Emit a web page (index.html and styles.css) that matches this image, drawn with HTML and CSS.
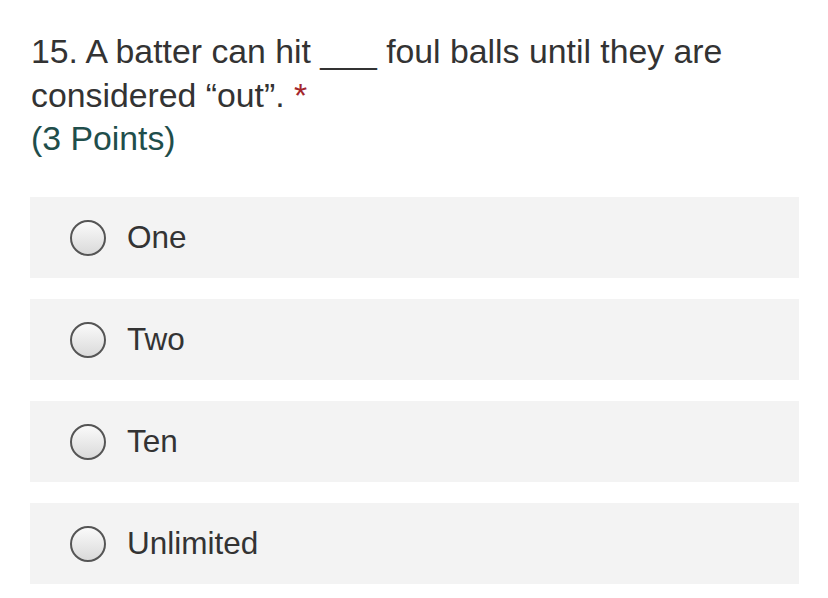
FILE: index.html
```html
<!DOCTYPE html>
<html>
<head>
<meta charset="utf-8">
<link rel="stylesheet" href="styles.css">
</head>
<body>
<div class="question">
  <div class="title">15. A batter can hit ___ foul balls until they are considered “out”. <span class="req">*</span></div>
  <div class="points">(3 Points)</div>
</div>
<div class="options">
  <label class="option"><span class="radio"></span><span class="label">One</span></label>
  <label class="option"><span class="radio"></span><span class="label">Two</span></label>
  <label class="option"><span class="radio"></span><span class="label">Ten</span></label>
  <label class="option"><span class="radio"></span><span class="label">Unlimited</span></label>
</div>
</body>
</html>
```
FILE: styles.css
```css
html, body {
  margin: 0;
  padding: 0;
  background: #ffffff;
}
body {
  font-family: "Liberation Sans", Arial, sans-serif;
  color: #333333;
  padding: 30px 30px 0 31px;
  width: 768px;
}
.question {
  font-size: 33.8px;
  line-height: 43.5px;
}
.title {
  color: #333333;
}
.req {
  color: #a4262c;
}
.points {
  color: #1f4e4b;
}
.options {
  margin-top: 36.5px;
  margin-left: -1px;
  display: flex;
  flex-direction: column;
  gap: 21px;
}
.option {
  background: #f3f3f3;
  height: 81px;
  display: flex;
  align-items: center;
  padding-left: 40px;
  gap: 21px;
}
.radio {
  width: 32px;
  height: 32px;
  border: 2px solid #555555;
  border-radius: 50%;
  background: linear-gradient(#fafafa, #dadada);
  flex: none;
}
.label {
  font-size: 31.5px;
  color: #333333;
}
```
